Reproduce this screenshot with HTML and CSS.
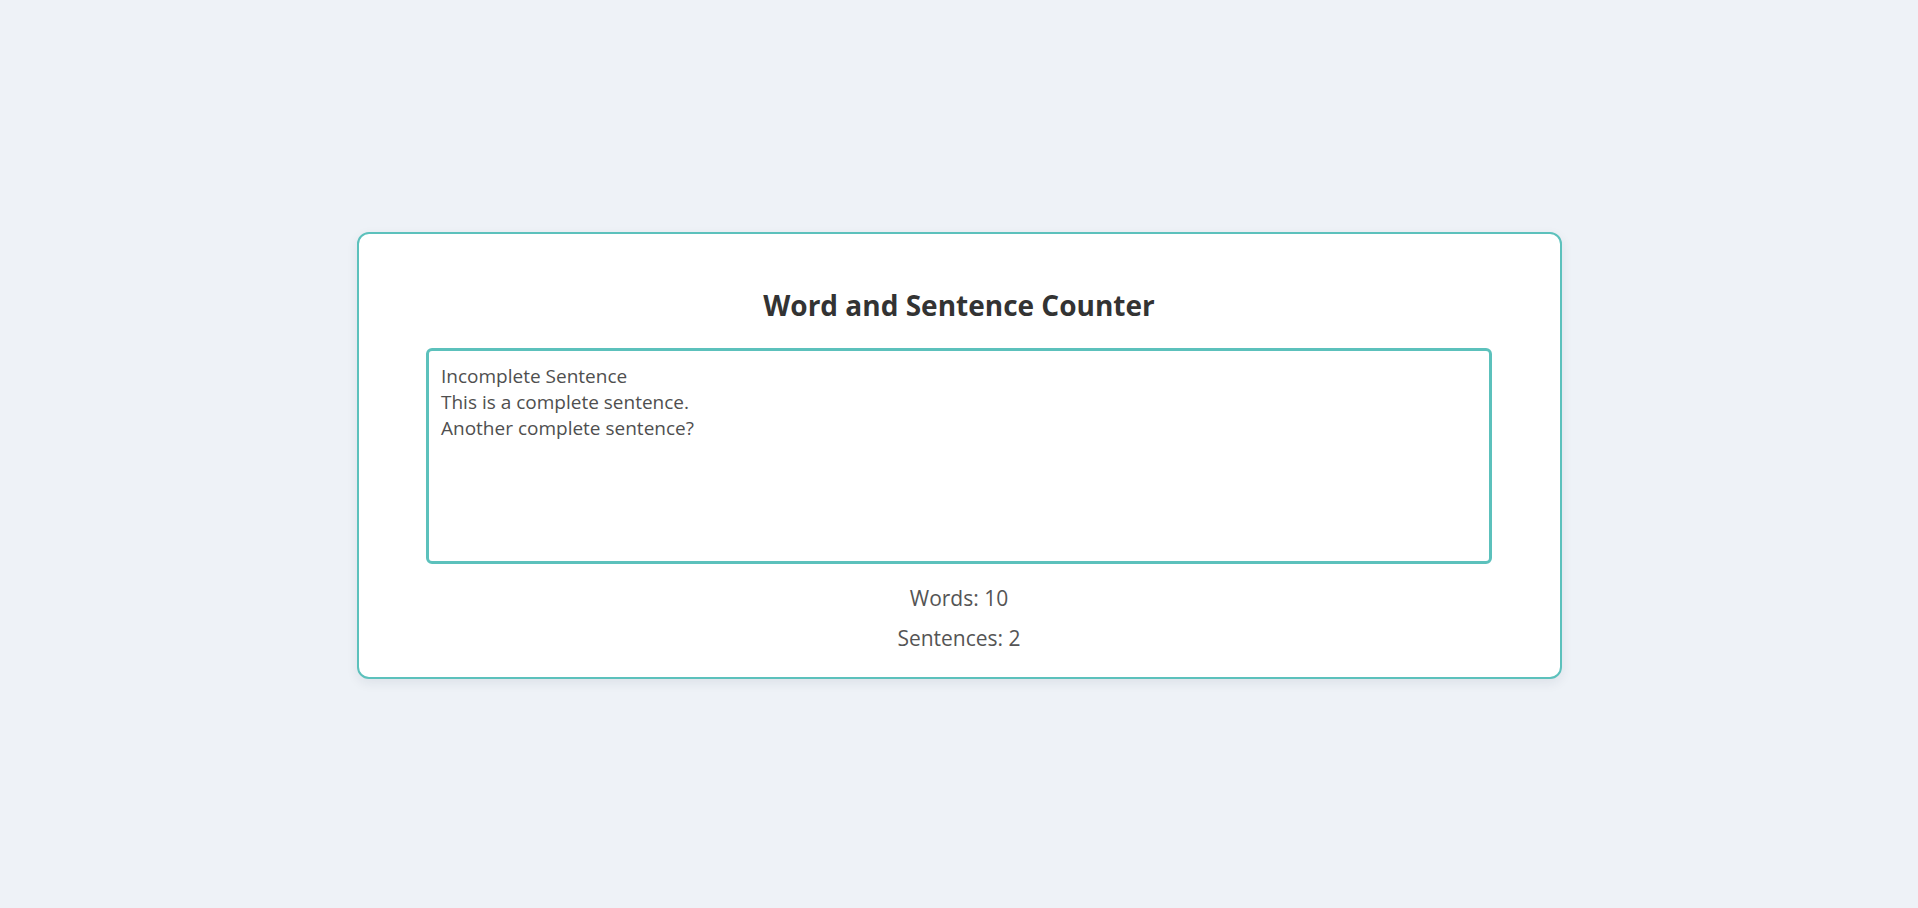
FILE: index.html
```html
<!DOCTYPE html>
<html lang="en">
<head>
<meta charset="utf-8">
<title>Word and Sentence Counter</title>
<link rel="stylesheet" href="styles.css">
</head>
<body>
<main class="card">
  <h1 class="title">Word and Sentence Counter</h1>
  <textarea class="input" spellcheck="false">Incomplete Sentence
This is a complete sentence.
Another complete sentence?</textarea>
  <div class="stats">
    <p class="stat">Words: 10</p>
    <p class="stat">Sentences: 2</p>
  </div>
</main>
</body>
</html>
```
FILE: styles.css
```css
* { box-sizing: border-box; }

html, body { height: 100%; }

body {
  margin: 0;
  padding-top: 3px;
  background: #eef2f7;
  font-family: "Open Sans", "Noto Sans", "Liberation Sans", sans-serif;
  display: flex;
  align-items: center;
  justify-content: center;
}

.card {
  width: 1205px;
  background: #ffffff;
  border: 2px solid #5cc1bc;
  border-radius: 12px;
  box-shadow: 0 4px 12px rgba(30, 40, 60, 0.08);
  padding: 51px 0 25px;
  display: flex;
  flex-direction: column;
  align-items: center;
}

.title {
  margin: 0 0 23px;
  font-size: 28px;
  line-height: 40px;
  font-weight: 700;
  color: #333333;
}

.input {
  display: block;
  width: 1066px;
  height: 216px;
  border: 3px solid #5cc1bc;
  border-radius: 6px;
  padding: 12px 12px;
  font-family: "Open Sans", "Noto Sans", "Liberation Sans", sans-serif;
  font-size: 19px;
  line-height: 26px;
  color: #4f4f4f;
  resize: none;
  outline: none;
  margin: 0 0 20px;
}

.stats {
  display: flex;
  flex-direction: column;
  align-items: center;
  gap: 12px;
}

.stat {
  margin: 0;
  font-size: 21px;
  line-height: 28px;
  color: #555555;
}
```
